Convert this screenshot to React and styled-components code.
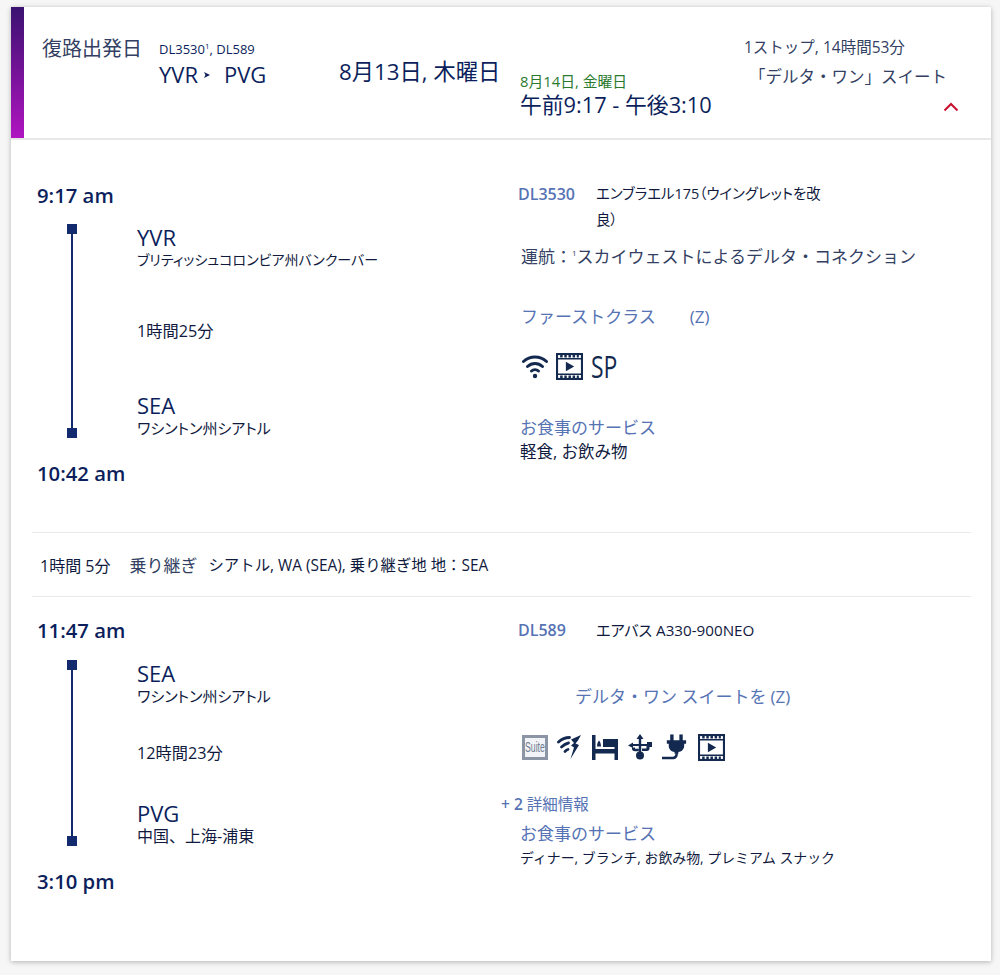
import styled, { createGlobalStyle } from "styled-components";

const navy = "#0c1f5c";
const ink = "#101a3e";
const slate = "#333f63";
const link = "#5673b4";

const GlobalStyle = createGlobalStyle`
    html, body {
        margin: 0;
        padding: 0;
        background: #f6f6f6;
    }
    body {
        font-family: "Open Sans", "Noto Sans CJK JP", sans-serif;
        color: ${navy};
    }
`;

const Page = styled.div`
    width: 1000px;
    height: 975px;
    padding: 7px 9px 14px 11px;
    box-sizing: border-box;
`;

const Card = styled.div`
    width: 980px;
    height: 954px;
    background: #fff;
    box-shadow: 0 1px 5px rgba(0, 0, 0, 0.28);
`;

const Header = styled.div`
    display: grid;
    grid-template-columns: 13px 135px 180px 181px 224px 247px;
    height: 131px;
    border-bottom: 2px solid #e8e8e8;
    box-sizing: content-box;
`;

const AccentBar = styled.div`
    background: linear-gradient(180deg, #3a1270 0%, #b014c0 100%);
`;

const HeaderLabel = styled.div`
    padding: 28px 0 0 18px;
    font-size: 20px;
    line-height: 28px;
    color: ${slate};
    white-space: nowrap;
`;

const FlightCol = styled.div`
    padding-top: 33px;
`;

const FlightNumbers = styled.div`
    font-size: 13px;
    line-height: 18px;
    white-space: nowrap;

    sup {
        font-size: 8px;
        line-height: 0;
    }
`;

const Route = styled.div`
    font-size: 22px;
    line-height: 30px;
    margin-top: 1px;
    white-space: nowrap;
    display: flex;
    align-items: center;

    svg {
        margin: 2px 13px 0 5px;
    }
`;

const DateCol = styled.div`
    padding-top: 50px;
    font-size: 22.3px;
    line-height: 30px;
    white-space: nowrap;
`;

const TimeCol = styled.div`
    padding-top: 64px;
`;

const NextDay = styled.div`
    font-size: 14.8px;
    line-height: 20px;
    color: #2a7a2e;
    white-space: nowrap;
`;

const TimeRange = styled.div`
    font-size: 21.8px;
    line-height: 28px;
    white-space: nowrap;
`;

const StopCol = styled.div`
    padding-top: 27px;
    color: ${slate};
    white-space: nowrap;
`;

const StopLine = styled.div`
    font-size: 15.5px;
    line-height: 26px;
`;

const CabinLine = styled.div`
    font-size: 16.5px;
    line-height: 26px;
    margin: 4px 0 0 5px;
`;

const ChevronRow = styled.div`
    margin: 12px 0 0 199px;
    line-height: 0;
`;

const Segment = styled.div`
    display: grid;
    grid-template-columns: 509px 1fr;
    height: ${(p) => p.$height}px;
    padding-top: ${(p) => p.$top}px;
    box-sizing: content-box;
`;

const Left = styled.div`
    padding-left: 26px;
`;

const ClockTime = styled.div`
    font-size: 20.3px;
    font-weight: 600;
    line-height: 28px;
    color: ${navy};
`;

const Leg = styled.div`
    display: grid;
    grid-template-columns: 96px 1fr;
    height: ${(p) => p.$height}px;
    margin: ${(p) => p.$top}px 0 21px;
`;

const Track = styled.div`
    width: 10px;
    margin-left: 30px;
    display: flex;
    flex-direction: column;
    align-items: center;
`;

const Stopper = styled.div`
    width: 10px;
    height: 10px;
    flex: none;
    background: #132a6e;
`;

const Line = styled.div`
    width: 2px;
    flex: 1;
    background: #132a6e;
`;

const Places = styled.div`
    margin-left: 4px;
    display: flex;
    flex-direction: column;
    justify-content: space-between;
`;

const Code = styled.div`
    font-size: 22px;
    line-height: 26px;
`;

const PlaceName = styled.div`
    font-size: ${(p) => p.$size}px;
    line-height: 20px;
    color: ${ink};
    white-space: nowrap;
    font-feature-settings: ${(p) => (p.$tight ? '"palt"' : "normal")};
`;

const Duration = styled.div`
    font-size: 16.2px;
    line-height: 20px;
    color: ${ink};
    font-feature-settings: "palt";
`;

const Right = styled.div``;

const FlightRow = styled.div`
    display: grid;
    grid-template-columns: 76px 230px;
    padding-top: ${(p) => p.$top}px;
`;

const FlightNo = styled.div`
    font-size: 16px;
    font-weight: 600;
    line-height: 26px;
    color: ${link};
    margin-left: -2px;
`;

const Aircraft = styled.div`
    font-size: ${(p) => p.$size}px;
    line-height: 26px;
    color: ${ink};
    font-feature-settings: "palt";
`;

const Operator = styled.div`
    margin: 11px 0 0 1px;
    font-size: 17px;
    line-height: 26px;
    color: ${slate};
    white-space: nowrap;

    sup {
        font-size: 8px;
        line-height: 0;
    }
`;

const CabinName = styled.div`
    display: flex;
    gap: ${(p) => p.$gap}px;
    margin: ${(p) => p.$top}px 0 0 ${(p) => p.$left}px;
    font-size: 17px;
    line-height: 26px;
    color: ${link};
    white-space: nowrap;
`;

const Amenities = styled.div`
    display: flex;
    align-items: center;
    gap: ${(p) => p.$gap}px;
    height: 34px;
    margin: ${(p) => p.$top}px 0 0 2px;
`;

const SuiteBadge = styled.span`
    display: flex;
    justify-content: center;
    align-items: center;
    flex: none;
    width: 26px;
    height: 25px;
    border: 3px solid #8b95a5;
    box-sizing: border-box;
    background: #f1f3f6;
`;

const SuiteText = styled.span`
    flex: none;
    font-family: "Liberation Sans", sans-serif;
    font-size: 14px;
    line-height: 19px;
    color: #6f7c90;
    transform: scaleX(0.62);
`;

const SpMark = styled.span`
    display: inline-block;
    width: 26px;
    font-size: 31px;
    line-height: 34px;
    color: #13294f;
    transform: scaleX(0.74);
    transform-origin: left center;
`;

const MoreInfo = styled.div`
    margin: 30px 0 0 -19px;
    font-size: 15.5px;
    line-height: 20px;
    color: ${link};

    b {
        font-weight: 600;
    }
`;

const MealTitle = styled.div`
    margin-top: ${(p) => p.$top}px;
    font-size: 17px;
    line-height: 26px;
    color: ${link};
`;

const MealList = styled.div`
    font-size: ${(p) => p.$size}px;
    line-height: 21px;
    color: ${ink};
    white-space: nowrap;
`;

const Divider = styled.div`
    height: 1px;
    margin: 0 20px 0 21px;
    background: #e9e9e9;
`;

const Layover = styled.div`
    display: flex;
    align-items: center;
    height: 63px;
    margin-left: 29px;
    font-size: 15.4px;
    color: ${ink};
    white-space: nowrap;
`;

const LayoverTime = styled.span`
    font-size: 16px;
`;

const LayoverLabel = styled.span`
    margin: 0 11px 0 19px;
    color: ${slate};
    font-size: 17px;
`;

const Chevron = () => (
    <svg width="16" height="10" viewBox="0 0 16 10" fill="none" stroke="#c8102e" strokeWidth="2">
        <path d="M1.5 8.5 8 2l6.500 6.500" />
    </svg>
);

const RouteArrow = () => (
    <svg width="8" height="8" viewBox="0 0 8 8" fill={navy}>
        <path d="M1 1l6 3-6 3 1.500-3z" />
    </svg>
);

const WifiIcon = () => (
    <svg width="26" height="26" viewBox="0 0 26 26" fill="none" stroke="#13294f" strokeWidth="3" strokeLinecap="round">
        <path d="M1.500 8.500c6.500-6 16.500-6 23 0" />
        <path d="M5.500 13.500c4.300-4 10.700-4 15 0" />
        <path d="M9.500 18c2-1.800 5-1.800 7 0" />
        <circle cx="13" cy="23" r="2.200" fill="#13294f" stroke="none" />
    </svg>
);

const FilmIcon = ({ size = 27 }) => (
    <svg width={size} height={size} viewBox="0 0 26 26" fill="none">
        <rect x="1" y="1" width="24" height="24" stroke="#13294f" strokeWidth="2" />
        <path d="M1 5.500h24M1 20.500h24" stroke="#13294f" strokeWidth="1.500" />
        <path d="M4 3.200h18M4 22.800h18" stroke="#13294f" strokeWidth="2.400" strokeDasharray="2.400 1.600" />
        <path d="M9.500 8.500 17.500 13l-8 4.500z" fill="#13294f" />
    </svg>
);

const HighSpeedWifiIcon = () => (
    <svg width="26" height="26" viewBox="0 0 26 26" fill="none" stroke="#13294f" strokeWidth="2.800" strokeLinecap="round">
        <path d="M1.500 8c3.500-3.200 7.500-4.500 11-4.500" />
        <path d="M4.500 13c2.500-2.500 5-3.700 7-4" />
        <path d="M8 17.500c1-1 2-1.700 3-2" />
        <path d="M24 1 14 5.500l3 3.500-3 2.500 3 2-3.500 11.500 8.500-14-3.500-1.500 2.500-3z" fill="#13294f" stroke="none" />
    </svg>
);

const BedIcon = () => (
    <svg width="26" height="25" viewBox="0 0 26 25" fill="#13294f">
        <rect x="0" y="0" width="3.500" height="25" />
        <rect x="22.500" y="7" width="3.500" height="18" />
        <rect x="0" y="14" width="26" height="4.500" />
        <path d="M5 11.500c0-3 1-5 2-6 1 1 2 3 2 6z" />
        <rect x="11" y="4" width="15" height="8" />
    </svg>
);

const UsbIcon = () => (
    <svg width="26" height="26" viewBox="0 0 26 26" fill="#13294f">
        <path d="M13 0l3.500 5h-2.300v14h-2.400V5H9.500z" />
        <path d="M1 11.500 6 8.500V10h14V8h5v5h-2.500v1.500c0 1.500-1 2.500-2.500 2.500h-5v-2.500h4.500V12H6v2z" />
        <path d="M5 13.500h3v1.300h3.800v2.500H8c-2 0-3-1-3-2.500z" />
        <circle cx="13" cy="21.500" r="4" />
    </svg>
);

const PlugIcon = () => (
    <svg width="27" height="26" viewBox="0 0 28 26" fill="#13294f">
        <rect x="8.500" y="0" width="3.500" height="7" />
        <rect x="18" y="0" width="3.500" height="7" />
        <path d="M5 6h20v3.500h-2V12c0 3.500-3 6-6 6.300V20h-4v-1.700C10 18 7 15.500 7 12V9.500H5z" />
        <path d="M0 23h11c2 0 3-1 3-3.500h2.500c0 4.300-2 6.300-5.500 6.300H0z" />
    </svg>
);

const App = () => {
    return (
        <Page>
            <GlobalStyle />
            <Card>
                <Header>
                    <AccentBar />
                    <HeaderLabel>復路出発日</HeaderLabel>
                    <FlightCol>
                        <FlightNumbers>
                            DL3530<sup>1</sup>, DL589
                        </FlightNumbers>
                        <Route>
                            YVR
                            <RouteArrow />
                            PVG
                        </Route>
                    </FlightCol>
                    <DateCol>8月13日, 木曜日</DateCol>
                    <TimeCol>
                        <NextDay>8月14日, 金曜日</NextDay>
                        <TimeRange>午前9:17 - 午後3:10</TimeRange>
                    </TimeCol>
                    <StopCol>
                        <StopLine>1ストップ, 14時間53分</StopLine>
                        <CabinLine>「デルタ・ワン」スイート</CabinLine>
                        <ChevronRow>
                            <Chevron />
                        </ChevronRow>
                    </StopCol>
                </Header>

                <Segment $height={351} $top={41}>
                    <Left>
                        <ClockTime>9:17 am</ClockTime>
                        <Leg $height={214} $top={15}>
                            <Track>
                                <Stopper />
                                <Line />
                                <Stopper />
                            </Track>
                            <Places>
                                <div>
                                    <Code>YVR</Code>
                                    <PlaceName $size={14} $tight>ブリティッシュコロンビア州バンクーバー</PlaceName>
                                </div>
                                <Duration>1時間25分</Duration>
                                <div>
                                    <Code>SEA</Code>
                                    <PlaceName $size={15} $tight>ワシントン州シアトル</PlaceName>
                                </div>
                            </Places>
                        </Leg>
                        <ClockTime>10:42 am</ClockTime>
                    </Left>
                    <Right>
                        <FlightRow $top={0}>
                            <FlightNo>DL3530</FlightNo>
                            <Aircraft $size={14.4}>エンブラエル175（ウイングレットを改良）</Aircraft>
                        </FlightRow>
                        <Operator>
                            運航：<sup>1</sup>スカイウェストによるデルタ・コネクション
                        </Operator>
                        <CabinName $top={34} $left={1} $gap={34}>
                            <span>ファーストクラス</span>
                            <span>(Z)</span>
                        </CabinName>
                        <Amenities $top={19} $gap={8}>
                            <WifiIcon />
                            <FilmIcon />
                            <SpMark>SP</SpMark>
                        </Amenities>
                        <MealTitle $top={32}>お食事のサービス</MealTitle>
                        <MealList $size={16.5}>軽食, お飲み物</MealList>
                    </Right>
                </Segment>

                <Divider />
                <Layover>
                    <LayoverTime>1時間 5分</LayoverTime>
                    <LayoverLabel>乗り継ぎ</LayoverLabel>
                    シアトル, WA (SEA), 乗り継ぎ地 地：SEA
                </Layover>
                <Divider />

                <Segment $height={345} $top={19}>
                    <Left>
                        <ClockTime>11:47 am</ClockTime>
                        <Leg $height={186} $top={16}>
                            <Track>
                                <Stopper />
                                <Line />
                                <Stopper />
                            </Track>
                            <Places>
                                <div>
                                    <Code>SEA</Code>
                                    <PlaceName $size={15} $tight>ワシントン州シアトル</PlaceName>
                                </div>
                                <Duration>12時間23分</Duration>
                                <div>
                                    <Code>PVG</Code>
                                    <PlaceName $size={16}>中国、上海-浦東</PlaceName>
                                </div>
                            </Places>
                        </Leg>
                        <ClockTime>3:10 pm</ClockTime>
                    </Left>
                    <Right>
                        <FlightRow $top={1}>
                            <FlightNo>DL589</FlightNo>
                            <Aircraft $size={15.2}>エアバス A330-900NEO</Aircraft>
                        </FlightRow>
                        <CabinName $top={41} $left={55} $gap={4}>
                            <span>デルタ・ワン スイートを</span>
                            <span>(Z)</span>
                        </CabinName>
                        <Amenities $top={20} $gap={9}>
                            <SuiteBadge>
                                <SuiteText>Suite</SuiteText>
                            </SuiteBadge>
                            <HighSpeedWifiIcon />
                            <BedIcon />
                            <UsbIcon />
                            <PlugIcon />
                            <FilmIcon />
                        </Amenities>
                        <MoreInfo>
                            <b>+ 2</b> 詳細情報
                        </MoreInfo>
                        <MealTitle $top={7}>お食事のサービス</MealTitle>
                        <MealList $size={13.9}>ディナー, ブランチ, お飲み物, プレミアム スナック</MealList>
                    </Right>
                </Segment>
            </Card>
        </Page>
    );
};

export default App;
